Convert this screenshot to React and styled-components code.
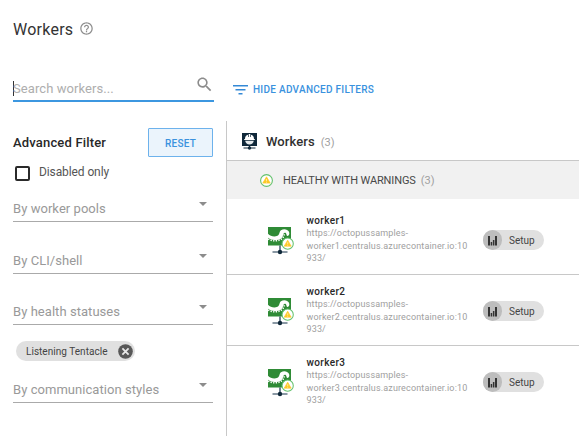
import React from "react";
import styled, { createGlobalStyle } from "styled-components";

const GlobalStyle = createGlobalStyle`
  *, *::before, *::after { box-sizing: border-box; }
  html, body { margin: 0; padding: 0; background: #fff; }
  body { font-family: Roboto, "Liberation Sans", sans-serif; color: #333; overflow: hidden; }
`;

const Page = styled.div`
  width: 579px;
  height: 436px;
  display: flex;
  flex-direction: column;
  overflow: hidden;
  background: #fff;
`;

const TitleBar = styled.header`
  height: 60px;
  padding: 0 0 0 13px;
  display: flex;
  align-items: center;
  gap: 6px;
`;

const Title = styled.h1`
  margin: 0;
  font-size: 16px;
  line-height: 20px;
  font-weight: 400;
  letter-spacing: 0.25px;
  color: #333;
`;

const HelpSlot = styled.span`
  display: flex;
  margin-top: -4px;
`;

const Toolbar = styled.div`
  height: 61px;
  display: flex;
  align-items: flex-start;
  padding: 12px 0 0 13px;
`;

const SearchField = styled.div`
  width: 201px;
  height: 30px;
  display: flex;
  border-bottom: 2px solid #3c97e0;
`;

const Caret = styled.span`
  width: 1px;
  height: 15px;
  margin: 9px -1px 0 0;
  background: #333;
`;

const SearchText = styled.span`
  flex: 1;
  margin-top: 8px;
  font-size: 13px;
  line-height: 18px;
  letter-spacing: 0.08px;
  color: #aeaeae;
`;

const SearchIconSlot = styled.span`
  display: flex;
  margin: 3px 0 0;
`;

const FilterToggle = styled.button`
  display: flex;
  align-items: center;
  gap: 5px;
  margin: 9px 0 0 19px;
  padding: 0;
  height: 18px;
  border: 0;
  background: none;
  font: 500 10px/18px Roboto, sans-serif;
  letter-spacing: 0.28px;
  color: #3a92de;
`;

const Columns = styled.main`
  flex: 1;
  display: grid;
  grid-template-columns: 226px 1fr;
`;

const Sidebar = styled.aside`
  padding: 7px 13px 0;
  display: flex;
  flex-direction: column;
`;

const FilterHeader = styled.div`
  display: flex;
  justify-content: space-between;
  align-items: center;
  height: 29px;
`;

const FilterTitle = styled.h2`
  margin: 0;
  font-size: 13px;
  line-height: 18px;
  font-weight: 500;
  letter-spacing: 0.17px;
  color: #282828;
`;

const ResetButton = styled.button`
  width: 65px;
  height: 29px;
  padding: 3px 0 0;
  border: 1px solid #6db2ec;
  border-radius: 1px;
  background: #ebf4fc;
  color: #3a92de;
  font: 500 10px/18px Roboto, sans-serif;
  letter-spacing: 0.25px;
`;

const CheckRow = styled.label`
  display: flex;
  align-items: center;
  gap: 9px;
  height: 18px;
  margin-top: 6px;
  padding-left: 2px;
  font-size: 12px;
  letter-spacing: -0.1px;
  color: #555;
`;

const CheckBox = styled.span`
  width: 15px;
  height: 15px;
  margin-top: 2px;
  border: 2px solid #2a2a2a;
  border-radius: 2px;
`;

const SelectField = styled.div`
  height: 26px;
  margin-top: ${(p) => p.$gap}px;
  display: flex;
  justify-content: space-between;
  border-bottom: 1px solid #aaa;
  font-size: 13px;
  line-height: 25px;
  letter-spacing: 0.05px;
  color: #999;
`;

const Arrow = styled.span`
  width: 8px;
  height: 4px;
  margin: 6px 6px 0 0;
  background: #8c8c8c;
  clip-path: polygon(0 0, 100% 0, 50% 100%);
`;

const Chip = styled.div`
  display: flex;
  align-items: center;
  justify-content: space-between;
  width: 119px;
  height: 20px;
  margin: 16px 0 0 3px;
  padding: 0 2px 0 10px;
  border-radius: 10px;
  background: #e0e0e0;
  font-size: 10px;
  letter-spacing: 0.03px;
  color: #444;
`;

const Results = styled.section`
  border-left: 1px solid #c8c8c8;
`;

const ResultsHeader = styled.div`
  height: 40px;
  display: flex;
  align-items: center;
  padding: 2px 0 0 15px;
  border-bottom: 1px solid #c8c8c8;
`;

const ResultsTitle = styled.h2`
  margin: 0 6px 0 9px;
  font-size: 13px;
  line-height: 18px;
  font-weight: 500;
  letter-spacing: 0.1px;
  color: #303030;
`;

const Count = styled.span`
  margin-top: ${(p) => p.$drop || 0}px;
  font-size: 11px;
  color: #a0a0a0;
`;

const GroupHeader = styled.div`
  height: 38px;
  margin-bottom: 5px;
  padding-left: 33px;
  display: flex;
  align-items: center;
  background: #f1f1f1;
`;

const GroupName = styled.span`
  margin: 0 5px 0 10px;
  font-size: 11px;
  letter-spacing: -0.12px;
  color: #484848;
`;

const WorkerRow = styled.article`
  height: 71px;
  display: grid;
  grid-template-columns: 39.5px 176.5px auto;
  justify-content: start;
  padding: 10px 0 0 40px;
  border-bottom: ${(p) => (p.$last ? "0" : "1px solid #c8c8c8")};
`;

const WorkerIconSlot = styled.span`
  display: flex;
  padding-top: 13px;
`;

const WorkerName = styled.div`
  font-size: 10px;
  line-height: 13px;
  font-weight: 500;
  letter-spacing: 0.36px;
  color: #282828;
`;

const WorkerUrl = styled.div`
  font-size: 9px;
  line-height: 12.7px;
  letter-spacing: 0.15px;
  color: #a0a0a0;
`;

const Role = styled.div`
  display: flex;
  align-items: center;
  gap: 7px;
  width: 61px;
  height: 20px;
  margin-top: 16px;
  border-radius: 10px;
  background: #e0e0e0;
  font-size: 10px;
  color: #444;
`;

const RoleBadge = styled.span`
  width: 19px;
  height: 20px;
  display: flex;
  align-items: center;
  justify-content: center;
  border-radius: 10px;
  background: #bdbdbd;
`;

const HelpIcon = () => (
  <svg width="15" height="15" viewBox="0 0 24 24" fill="#8e8e8e">
    <path d="M11 18h2v-2h-2v2zm1-16C6.48 2 2 6.48 2 12s4.48 10 10 10 10-4.48 10-10S17.52 2 12 2zm0 18c-4.41 0-8-3.59-8-8s3.59-8 8-8 8 3.59 8 8-3.59 8-8 8zm0-14c-2.21 0-4 1.79-4 4h2c0-1.1.9-2 2-2s2 .9 2 2c0 2-3 1.75-3 5h2c0-2.25 3-2.5 3-5 0-2.21-1.79-4-4-4z" />
  </svg>
);

const SearchIcon = () => (
  <svg width="19" height="19" viewBox="0 0 24 24" fill="#8c8c8c">
    <path d="M15.5 14h-.79l-.28-.27C15.41 12.59 16 11.11 16 9.5 16 5.91 13.09 3 9.5 3S3 5.91 3 9.5 5.91 16 9.5 16c1.61 0 3.09-.59 4.23-1.57l.27.28v.79l5 4.99L20.49 19l-4.99-5zm-6 0C7.01 14 5 11.99 5 9.5S7.01 5 9.5 5 14 7.01 14 9.5 11.99 14 9.5 14z" />
  </svg>
);

const FilterIcon = () => (
  <svg width="15" height="10" viewBox="0 0 15 10" fill="#3489d6">
    <rect x="0" y="0" width="15" height="1.5" />
    <rect x="2.5" y="4" width="10" height="1.5" />
    <rect x="5.5" y="8" width="4" height="1.5" />
  </svg>
);

const CloseIcon = () => (
  <svg width="15" height="15" viewBox="0 0 15 15">
    <circle cx="7.5" cy="7.5" r="7.3" fill="#585858" />
    <path d="M4.4 4.4l6.2 6.2M10.6 4.4l-6.2 6.2" stroke="#e8e8e8" strokeWidth="1.8" />
  </svg>
);

const WorkersIcon = () => (
  <svg width="15" height="17" viewBox="0 0 15 17">
    <rect width="15" height="13" fill="#10283a" />
    <path d="M3 6c0-2.500 1.300-4 3-4.300V4h.7V1h1.600v3H9V1.700C10.700 2 12 3.500 12 6h.8v1H2.200V6z" fill="#fff" />
    <path d="M3.200 7.700h8.600C11.500 10 9.800 11.400 7.500 11.400S3.500 10 3.200 7.700z" fill="#e6eaec" />
    <path d="M7.500 13v2M1.500 15h12" stroke="#10283a" strokeWidth="1" />
    <circle cx="7.500" cy="15" r="1.700" fill="#10283a" />
  </svg>
);

const WarningMark = () => (
  <>
    <circle cx="6.500" cy="6.500" r="5.900" fill="#fff" stroke="#63c16d" strokeWidth="1.100" />
    <path d="M6.500 2.800L10.200 9.100H2.800z" fill="#fdc928" stroke="#fdc928" strokeWidth=".7" strokeLinejoin="round" />
    <path d="M6.500 5v2.200M6.500 7.800v.9" stroke="#fff0b8" strokeWidth=".8" />
  </>
);

const WarningIcon = () => (
  <svg width="13" height="13" viewBox="0 0 13 13"><WarningMark /></svg>
);

const TentacleIcon = () => (
  <svg width="27" height="29" viewBox="0 0 27 29">
    <rect x="1" y="0" width="23" height="18.5" fill="#2f8b36" />
    <path d="M1 6.800C3.500 9.500 7.500 10.300 10.500 8.800C13 7.400 12 4.800 14 3.300C16.500 1.400 20.500 2 22 4.800C22.900 6.800 22 8.900 20.600 9C19.300 9 19.800 7 18.800 6C17.300 4.900 16.300 6.500 16 8.300C15.200 12 11.500 13.500 7.500 13.100C4.800 12.900 2.500 12 1 10.800z" fill="#fff" />
    <path d="M1.300 11.800C5 14.600 12.500 14.500 15.500 11.200C17 9.600 16.800 7.800 17.600 6.900" fill="none" stroke="#fff" strokeWidth="1.500" strokeDasharray="1.300 1.300" />
    <path d="M13 18.500v6M5.500 25h15" stroke="#17334a" strokeWidth="1.200" />
    <circle cx="13" cy="25" r="2.200" fill="#10283a" />
    <g transform="translate(14.500 10.500) scale(.95)"><WarningMark /></g>
  </svg>
);

const BarsIcon = () => (
  <svg width="9" height="11" viewBox="0 0 9 11" fill="#333">
    <rect x="0" y="1" width="2" height="9.500" />
    <rect x="2.700" y="7" width="1.500" height="3.500" />
    <rect x="4.900" y="5" width="1.500" height="5.500" />
    <rect x="7" y="1" width="2" height="9.500" />
  </svg>
);

const workers = [1, 2, 3];

const Select = ({ label, gap }) => (
  <SelectField $gap={gap}>
    <span>{label}</span>
    <Arrow />
  </SelectField>
);

export default function App() {
  return (
    <Page>
      <GlobalStyle />
      <TitleBar>
        <Title>Workers</Title>
        <HelpSlot><HelpIcon /></HelpSlot>
      </TitleBar>
      <Toolbar>
        <SearchField>
          <Caret />
          <SearchText>Search workers...</SearchText>
          <SearchIconSlot><SearchIcon /></SearchIconSlot>
        </SearchField>
        <FilterToggle><FilterIcon />HIDE ADVANCED FILTERS</FilterToggle>
      </Toolbar>
      <Columns>
        <Sidebar>
          <FilterHeader>
            <FilterTitle>Advanced Filter</FilterTitle>
            <ResetButton>RESET</ResetButton>
          </FilterHeader>
          <CheckRow><CheckBox />Disabled only</CheckRow>
          <Select label="By worker pools" gap={15} />
          <Select label="By CLI/shell" gap={26} />
          <Select label="By health statuses" gap={25} />
          <Chip>Listening Tentacle<CloseIcon /></Chip>
          <Select label="By communication styles" gap={16} />
        </Sidebar>
        <Results>
          <ResultsHeader>
            <WorkersIcon />
            <ResultsTitle>Workers</ResultsTitle>
            <Count $drop={2}>(3)</Count>
          </ResultsHeader>
          <GroupHeader>
            <WarningIcon />
            <GroupName>HEALTHY WITH WARNINGS</GroupName>
            <Count>(3)</Count>
          </GroupHeader>
          {workers.map((n) => (
            <WorkerRow key={n} $last={n === workers.length}>
              <WorkerIconSlot><TentacleIcon /></WorkerIconSlot>
              <div>
                <WorkerName>worker{n}</WorkerName>
                <WorkerUrl>
                  https://octopussamples-<br />
                  worker{n}.centralus.azurecontainer.io:10<br />
                  933/
                </WorkerUrl>
              </div>
              <Role><RoleBadge><BarsIcon /></RoleBadge>Setup</Role>
            </WorkerRow>
          ))}
        </Results>
      </Columns>
    </Page>
  );
}
